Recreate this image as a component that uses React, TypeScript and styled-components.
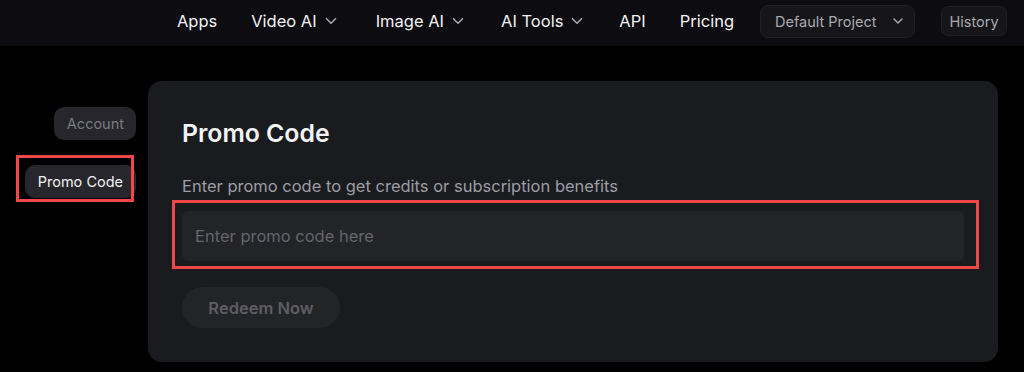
import React from 'react';
import styled, { createGlobalStyle } from 'styled-components';

const GlobalStyle = createGlobalStyle`
  html, body {
    margin: 0;
    padding: 0;
    background: #000;
    font-family: Inter, "Noto Sans", "Liberation Sans", sans-serif;
  }
  * { box-sizing: border-box; }
`;

const Page = styled.div`
  width: 1024px;
  height: 372px;
  background: #000;
  overflow: hidden;
`;

const Header = styled.header`
  height: 46px;
  background: #0d0d11;
  display: flex;
  align-items: center;
  justify-content: flex-end;
  padding-right: 17px;
`;

const NavLink = styled.a<{ $gap: number }>`
  display: flex;
  align-items: center;
  gap: 5px;
  color: #f2f2f4;
  font-size: 16.5px;
  margin-right: ${(p) => p.$gap}px;
  margin-top: -4px;
  cursor: pointer;
`;

const Chevron = styled.svg<{ $size: number }>`
  width: ${(p) => p.$size}px;
  height: ${(p) => p.$size}px;
  color: #a3a3a9;
`;

const ProjectSelect = styled.button`
  width: 155px;
  height: 33px;
  margin-top: -4px;
  margin-right: 26px;
  display: flex;
  align-items: center;
  justify-content: space-between;
  padding: 0 8px 0 14px;
  background: #16161a;
  border: 1px solid #1f1f24;
  border-radius: 8px;
  color: #a9a9b0;
  font-family: inherit;
  font-size: 14.5px;
`;

const HistoryButton = styled.button`
  height: 30px;
  width: 66px;
  margin-top: -4px;
  padding: 0;
  background: #16161a;
  border: 1px solid #1f1f24;
  border-radius: 7px;
  color: #a9a9b0;
  font-family: inherit;
  font-size: 14.5px;
`;

const Main = styled.main`
  display: flex;
  padding-top: 35px;
`;

const Sidebar = styled.nav`
  width: 148px;
  padding: 26px 12px 0 0;
  display: flex;
  flex-direction: column;
  align-items: flex-end;
  gap: 25px;
`;

const SideItem = styled.div<{ $active?: boolean }>`
  position: relative;
  height: 33px;
  padding: 0 ${(p) => (p.$active ? 13 : 12)}px 0 13px;
  display: flex;
  align-items: center;
  border-radius: 10px;
  background: #26262c;
  color: ${(p) => (p.$active ? '#f2f2f4' : '#7b7b82')};
  font-size: 14.5px;
`;

const Highlight = styled.span<{ $t: number; $r: number; $b: number; $l: number }>`
  position: absolute;
  top: ${(p) => -p.$t}px;
  right: ${(p) => -p.$r}px;
  bottom: ${(p) => -p.$b}px;
  left: ${(p) => -p.$l}px;
  border: 3px solid #f04848;
  pointer-events: none;
`;

const Card = styled.section`
  width: 850px;
  height: 281px;
  background: #1a1b1f;
  border-radius: 14px;
  padding: 37px 34px 0;
`;

const Title = styled.h1`
  margin: 0;
  color: #f4f4f6;
  font-size: 24.8px;
  font-weight: 600;
  line-height: 30px;
`;

const Label = styled.p`
  margin: 26px 0 13px;
  color: #9d9da4;
  font-size: 16.5px;
  line-height: 24px;
`;

const InputWrap = styled.div`
  position: relative;
  width: 782px;
`;

const Input = styled.input`
  width: 100%;
  height: 50px;
  padding: 0 13px;
  background: #232428;
  border: none;
  border-radius: 6px;
  color: #ddd;
  font-family: inherit;
  font-size: 16.5px;
  outline: none;

  &::placeholder {
    color: #65656b;
  }
`;

const RedeemButton = styled.button`
  margin-top: 26px;
  height: 41px;
  width: 158px;
  padding: 0;
  background: #232428;
  border: none;
  border-radius: 21px;
  color: #5d5d63;
  font-family: inherit;
  font-size: 16.5px;
  font-weight: 600;
`;

const ChevronDown = ({ size = 18 }: { size?: number }) => (
  <Chevron $size={size} viewBox="0 0 24 24" fill="none" stroke="currentColor" strokeWidth="2.2" strokeLinecap="round" strokeLinejoin="round">
    <path d="m6 9 6 6 6-6" />
  </Chevron>
);

const navItems = [
  { label: 'Apps', gap: 34 },
  { label: 'Video AI', menu: true, gap: 36 },
  { label: 'Image AI', menu: true, gap: 34 },
  { label: 'AI Tools', menu: true, gap: 33 },
  { label: 'API', gap: 34 },
  { label: 'Pricing', gap: 26 },
];

export default function App() {
  return (
    <Page>
      <GlobalStyle />
      <Header>
        {navItems.map((item) => (
          <NavLink key={item.label} $gap={item.gap}>
            {item.label}
            {item.menu && <ChevronDown />}
          </NavLink>
        ))}
        <ProjectSelect>
          Default Project
          <ChevronDown size={16} />
        </ProjectSelect>
        <HistoryButton>History</HistoryButton>
      </Header>
      <Main>
        <Sidebar>
          <SideItem>Account</SideItem>
          <SideItem $active>
            Promo Code
            <Highlight $t={10} $r={-2} $b={4} $l={9} />
          </SideItem>
        </Sidebar>
        <Card>
          <Title>Promo Code</Title>
          <Label>Enter promo code to get credits or subscription benefits</Label>
          <InputWrap>
            <Input placeholder="Enter promo code here" />
            <Highlight $t={11} $r={15} $b={8} $l={10} />
          </InputWrap>
          <RedeemButton>Redeem Now</RedeemButton>
        </Card>
      </Main>
    </Page>
  );
}
